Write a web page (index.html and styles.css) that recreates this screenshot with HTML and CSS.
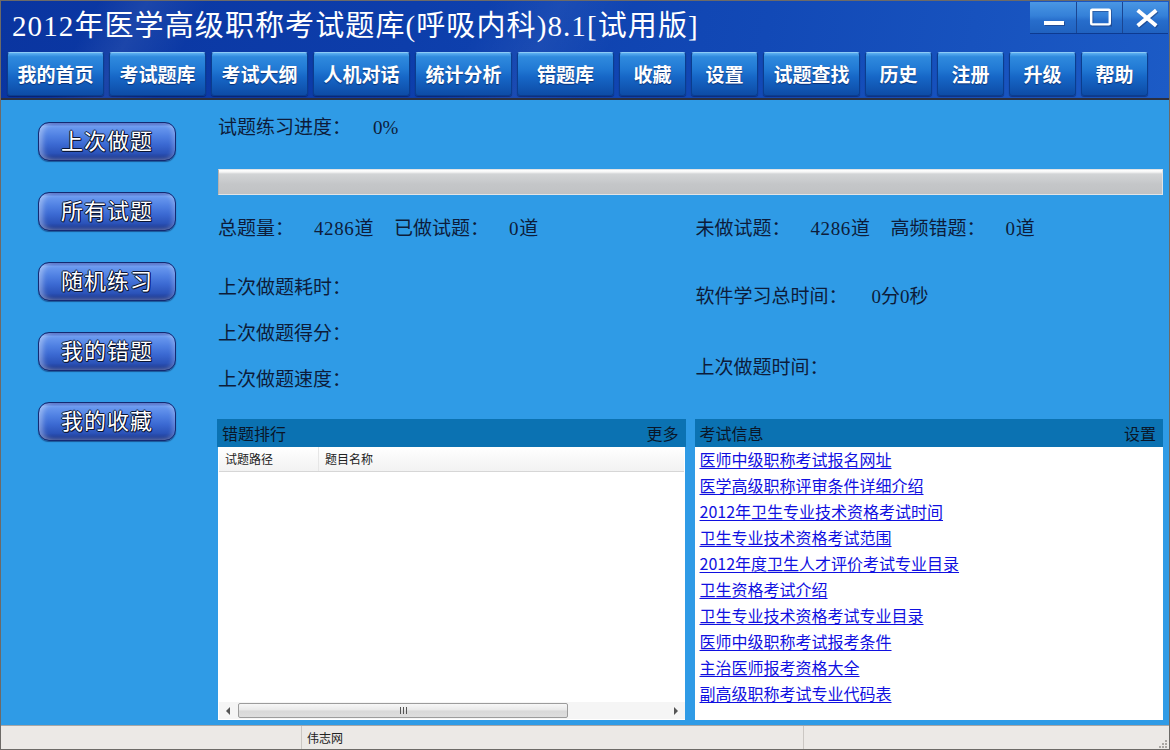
FILE: index.html
```html
<!DOCTYPE html>
<html lang="zh-CN">
<head>
<meta charset="utf-8">
<title>2012年医学高级职称考试题库</title>
<link rel="stylesheet" href="styles.css">
</head>
<body>
<div class="window">
  <header class="header">
    <div class="titlebar">
      <h1 class="title">2012年医学高级职称考试题库(呼吸内科)8.1[试用版]</h1>
      <div class="controls">
        <button class="ctl first" aria-label="最小化">
          <svg width="46" height="31" viewBox="0 0 46 31"><rect x="14" y="19" width="20" height="4" fill="#1a2f6a" opacity=".5" transform="translate(1,1)"/><rect x="14" y="19" width="20" height="4" fill="#fff"/></svg>
        </button>
        <button class="ctl" aria-label="最大化">
          <svg width="46" height="31" viewBox="0 0 46 31"><rect x="14.5" y="7.5" width="19" height="15" fill="none" stroke="#1a2f6a" stroke-opacity=".5" stroke-width="2.5" transform="translate(1,1)"/><rect x="14.5" y="7.5" width="19" height="15" rx="1" fill="none" stroke="#fff" stroke-width="2.5"/></svg>
        </button>
        <button class="ctl" aria-label="关闭">
          <svg width="46" height="31" viewBox="0 0 46 31"><path d="M15 8 L34 24 M34 8 L15 24" stroke="#1a2f6a" stroke-opacity=".5" stroke-width="4" transform="translate(1,1)"/><path d="M15 8 L34 24 M34 8 L15 24" stroke="#fff" stroke-width="4"/></svg>
        </button>
      </div>
    </div>
    <nav class="nav">
      <a class="nav-btn">我的首页</a>
      <a class="nav-btn">考试题库</a>
      <a class="nav-btn">考试大纲</a>
      <a class="nav-btn">人机对话</a>
      <a class="nav-btn">统计分析</a>
      <a class="nav-btn">错题库</a>
      <a class="nav-btn narrow">收藏</a>
      <a class="nav-btn narrow">设置</a>
      <a class="nav-btn">试题查找</a>
      <a class="nav-btn narrow">历史</a>
      <a class="nav-btn narrow">注册</a>
      <a class="nav-btn narrow">升级</a>
      <a class="nav-btn narrow">帮助</a>
    </nav>
  </header>

  <main class="main">
    <aside class="sidebar">
      <button class="side-btn">上次做题</button>
      <button class="side-btn">所有试题</button>
      <button class="side-btn">随机练习</button>
      <button class="side-btn">我的错题</button>
      <button class="side-btn">我的收藏</button>
    </aside>

    <section class="content">
      <div class="line"><span>试题练习进度：</span><span class="pct">0%</span></div>
      <div class="progress"></div>

      <div class="stats">
        <div class="line"><span>总题量：</span><span class="val">4286道</span><span class="lbl2">已做试题：</span><span class="val">0道</span></div>
        <div class="line"><span>未做试题：</span><span class="val">4286道</span><span class="lbl2">高频错题：</span><span class="val">0道</span></div>
      </div>

      <div class="info">
        <div class="info-col left">
          <div class="line">上次做题耗时：</div>
          <div class="line">上次做题得分：</div>
          <div class="line">上次做题速度：</div>
        </div>
        <div class="info-col right">
          <div class="line"><span>软件学习总时间：</span><span class="time">0分0秒</span></div>
          <div class="line">上次做题时间：</div>
        </div>
      </div>

      <div class="panels">
        <div class="panel">
          <div class="panel-head"><span>错题排行</span><span>更多</span></div>
          <div class="panel-body list">
            <div class="cols">
              <div class="col c1">试题路径</div>
              <div class="col c2">题目名称</div>
            </div>
            <div class="rows"></div>
            <div class="hscroll">
              <span class="arrow"><i class="tri-left"></i></span>
              <span class="thumb"><i class="grip"></i></span>
              <span class="track"></span>
              <span class="arrow"><i class="tri-right"></i></span>
            </div>
          </div>
        </div>
        <div class="panel">
          <div class="panel-head"><span>考试信息</span><span>设置</span></div>
          <ul class="panel-body links">
            <li><a href="#">医师中级职称考试报名网址</a></li>
            <li><a href="#">医学高级职称评审条件详细介绍</a></li>
            <li><a href="#">2012年卫生专业技术资格考试时间</a></li>
            <li><a href="#">卫生专业技术资格考试范围</a></li>
            <li><a href="#">2012年度卫生人才评价考试专业目录</a></li>
            <li><a href="#">卫生资格考试介绍</a></li>
            <li><a href="#">卫生专业技术资格考试专业目录</a></li>
            <li><a href="#">医师中级职称考试报考条件</a></li>
            <li><a href="#">主治医师报考资格大全</a></li>
            <li><a href="#">副高级职称考试专业代码表</a></li>
          </ul>
        </div>
      </div>
    </section>
  </main>

  <footer class="status">
    <div class="seg s1"></div>
    <div class="seg s2">伟志网</div>
    <div class="seg s3">
      <svg class="grip-corner" width="12" height="12" viewBox="0 0 12 12">
        <g fill="#a9a6a2"><rect x="9" y="3" width="2" height="2"/><rect x="6" y="6" width="2" height="2"/><rect x="9" y="6" width="2" height="2"/><rect x="3" y="9" width="2" height="2"/><rect x="6" y="9" width="2" height="2"/><rect x="9" y="9" width="2" height="2"/></g>
      </svg>
    </div>
  </footer>
</div>
</body>
</html>
```

FILE: styles.css
```css
* { box-sizing: border-box; margin: 0; padding: 0; }

html, body {
  width: 1170px;
  height: 750px;
  overflow: hidden;
}

body {
  background: #2f9be6;
  font-family: "Noto Sans CJK SC", "Liberation Sans", sans-serif;
}

.window {
  width: 1170px;
  height: 750px;
  border: 1px solid #6d6a67;
  display: flex;
  flex-direction: column;
  background: #2f9be6;
}

/* ---------- header ---------- */
.header {
  background:
    linear-gradient(118deg, transparent 8%, rgba(255,255,255,0.07) 12%, transparent 17%),
    linear-gradient(118deg, transparent 40%, rgba(255,255,255,0.05) 46%, transparent 52%),
    linear-gradient(100deg, #0a35a0 0%, #0d3eab 35%, #1249b6 65%, #1c5bc6 100%);
}

.titlebar {
  height: 47px;
  display: flex;
  justify-content: space-between;
  align-items: flex-start;
}

.title {
  font-family: "Liberation Serif", "Noto Sans CJK SC", serif;
  font-weight: 400;
  font-size: 29px;
  line-height: 29px;
  letter-spacing: 1.1px;
  color: #fff;
  margin: 11px 0 0 11px;
  white-space: nowrap;
}

.controls {
  display: flex;
  margin: 1px 1px 0 0;
  height: 31px;
  box-shadow: 0 1px 0 #0d3a90;
}

.ctl {
  width: 46px;
  height: 31px;
  border: none;
  border-left: 1px solid #1a4592;
  background: linear-gradient(#4a97e4 0%, #3480d8 45%, #276dcb 60%, #2062c0 100%);
  display: flex;
  align-items: center;
  justify-content: center;
}
.ctl.first { border-left: none; }
.ctl svg { display: block; }

.nav {
  height: 52px;
  display: flex;
  gap: 5px;
  padding: 4px 0 0 6px;
  border-bottom: 2px solid #2c3040;
}

.nav-btn {
  width: 97px;
  height: 44px;
  display: flex;
  align-items: center;
  justify-content: center;
  color: #fff;
  font-size: 19px;
  font-weight: 700;
  line-height: 1;
  padding-bottom: 1px;
  border: 1px solid #0b3d8e;
  border-top-color: #8ccbf7;
  border-radius: 3px;
  background: linear-gradient(#5eb1f2 0%, #2f8ade 9%, #2179d4 38%, #1666c6 58%, #0d4ca6 100%);
  text-shadow: 0 1px 1px rgba(0, 10, 60, 0.55);
  box-shadow: 0 1px 1px rgba(0, 0, 40, 0.4);
}
.nav-btn.narrow { width: 67px; }

/* ---------- main ---------- */
.main {
  flex: 1;
  display: flex;
  min-height: 0;
}

.sidebar {
  width: 216px;
  flex: none;
  padding: 22px 0 0 37px;
  display: flex;
  flex-direction: column;
  gap: 31px;
}

.side-btn {
  width: 138px;
  height: 39px;
  border-radius: 11px;
  border: 1px solid #142a72;
  background: linear-gradient(#2d4db5 0%, #6b9af0 9%, #4f80e2 35%, #3b69d2 58%, #2b53b9 82%, #182f80 100%);
  color: #fff;
  font-family: "Noto Sans CJK SC", sans-serif;
  font-size: 22px;
  line-height: 33px;
  padding-bottom: 4px;
  letter-spacing: 1px;
  text-shadow: -1px 0 #0a1433, 1px 0 #0a1433, 0 -1px #0a1433, 0 1px #0a1433, 1px 1px #0a1433;
  box-shadow: inset 4px 0 5px rgba(255,255,255,0.35), inset -3px 0 4px rgba(255,255,255,0.2), 0 1px 1px rgba(0,0,50,0.45);
}

.content {
  flex: 1;
  padding: 16px 6px 5px 0;
  display: flex;
  flex-direction: column;
  min-width: 0;
}

.line {
  height: 24px;
  line-height: 24px;
  font-family: "Liberation Serif", "Noto Sans CJK SC", serif;
  font-size: 19px;
  color: #0d1c3a;
  white-space: nowrap;
  padding-left: 1px;
}

.pct { margin-left: 22px; }
.val { margin-left: 20px; letter-spacing: 0.6px; }
.lbl2 { margin-left: 20px; }
.time { margin-left: 24px; }

.progress {
  margin: 29px 0 0 1px;
  height: 26px;
  border: 1px solid #e2e4e6;
  border-left-color: #b8b2ae;
  background: linear-gradient(#ffffff 0, #f6f6f6 2px, #d2d4d6 4px, #c4c6c8 60%, #c0c2c4 100%);
}

.stats {
  margin-top: 22px;
  display: grid;
  grid-template-columns: 1fr 1fr;
  column-gap: 9px;
}

.info {
  height: 178px;
  display: grid;
  grid-template-columns: 1fr 1fr;
  column-gap: 9px;
}

.info-col {
  display: flex;
  flex-direction: column;
}
.info-col.left { padding-top: 35px; gap: 22px; }
.info-col.right { padding-top: 44px; gap: 47px; }

.panels {
  height: 301px;
  display: grid;
  grid-template-columns: 1fr 1fr;
  column-gap: 9px;
}

.panel {
  display: flex;
  flex-direction: column;
  min-width: 0;
}

.panel-head {
  height: 28px;
  flex: none;
  background: #0b72b2;
  display: flex;
  justify-content: space-between;
  align-items: center;
  padding: 0 7px 0 5px;
  font-size: 16px;
  color: #0a1628;
}

.panel-body {
  flex: 1;
  background: #fff;
  min-height: 0;
}

.list {
  display: flex;
  flex-direction: column;
  margin: 0 1px;
}

.cols {
  height: 25px;
  display: flex;
  background: linear-gradient(#ffffff, #f2f2f2);
  border-bottom: 1px solid #d6d6d6;
  margin: 0 1px;
  font-size: 12px;
  color: #222;
}

.col {
  line-height: 24px;
  padding-left: 6px;
}
.c1 { width: 100px; border-right: 1px solid #e6e6e6; }
.c2 { flex: 1; }

.rows { flex: 1; }

.hscroll {
  height: 17px;
  margin: 0 0 1px 1px;
  display: flex;
  align-items: center;
  background: #f5f5f5;
}

.arrow {
  width: 17px;
  height: 15px;
  display: flex;
  align-items: center;
  justify-content: center;
}

.tri-left, .tri-right {
  display: block;
  width: 0;
  height: 0;
  border-top: 4px solid transparent;
  border-bottom: 4px solid transparent;
}
.tri-left { border-right: 4px solid #555; }
.tri-right { border-left: 4px solid #555; }

.thumb {
  width: 330px;
  height: 15px;
  margin-left: 2px;
  border: 1px solid #9c9c9c;
  border-radius: 2px;
  background: linear-gradient(#f7f7f7 0%, #e8e8e8 48%, #d8d8d8 52%, #dedede 100%);
  display: flex;
  align-items: center;
  justify-content: center;
}

.grip {
  display: block;
  width: 7px;
  height: 7px;
  background: repeating-linear-gradient(90deg, #555 0 1px, transparent 1px 3px);
}

.track { flex: 1; }

.links {
  list-style: none;
  padding-left: 5px;
  padding-top: 0;
}

.links li {
  height: 26px;
  line-height: 24px;
}

.links a {
  color: #1010e0;
  font-size: 16px;
  text-decoration: underline;
  text-underline-offset: 2px;
}

/* ---------- status bar ---------- */
.status {
  height: 24px;
  flex: none;
  display: flex;
  background: #ece9e6;
  border-top: 1px solid #a7a7a7;
  font-size: 12px;
  color: #222;
}

.seg {
  line-height: 23px;
  border-right: 1px solid #cbc7c3;
}
.s1 { width: 301px; }
.s2 { width: 502px; padding-left: 5px; }
.s3 {
  flex: 1;
  border-right: none;
  display: flex;
  justify-content: flex-end;
  align-items: flex-end;
}
.grip-corner { display: block; margin: 0 1px 0 0; }
```
